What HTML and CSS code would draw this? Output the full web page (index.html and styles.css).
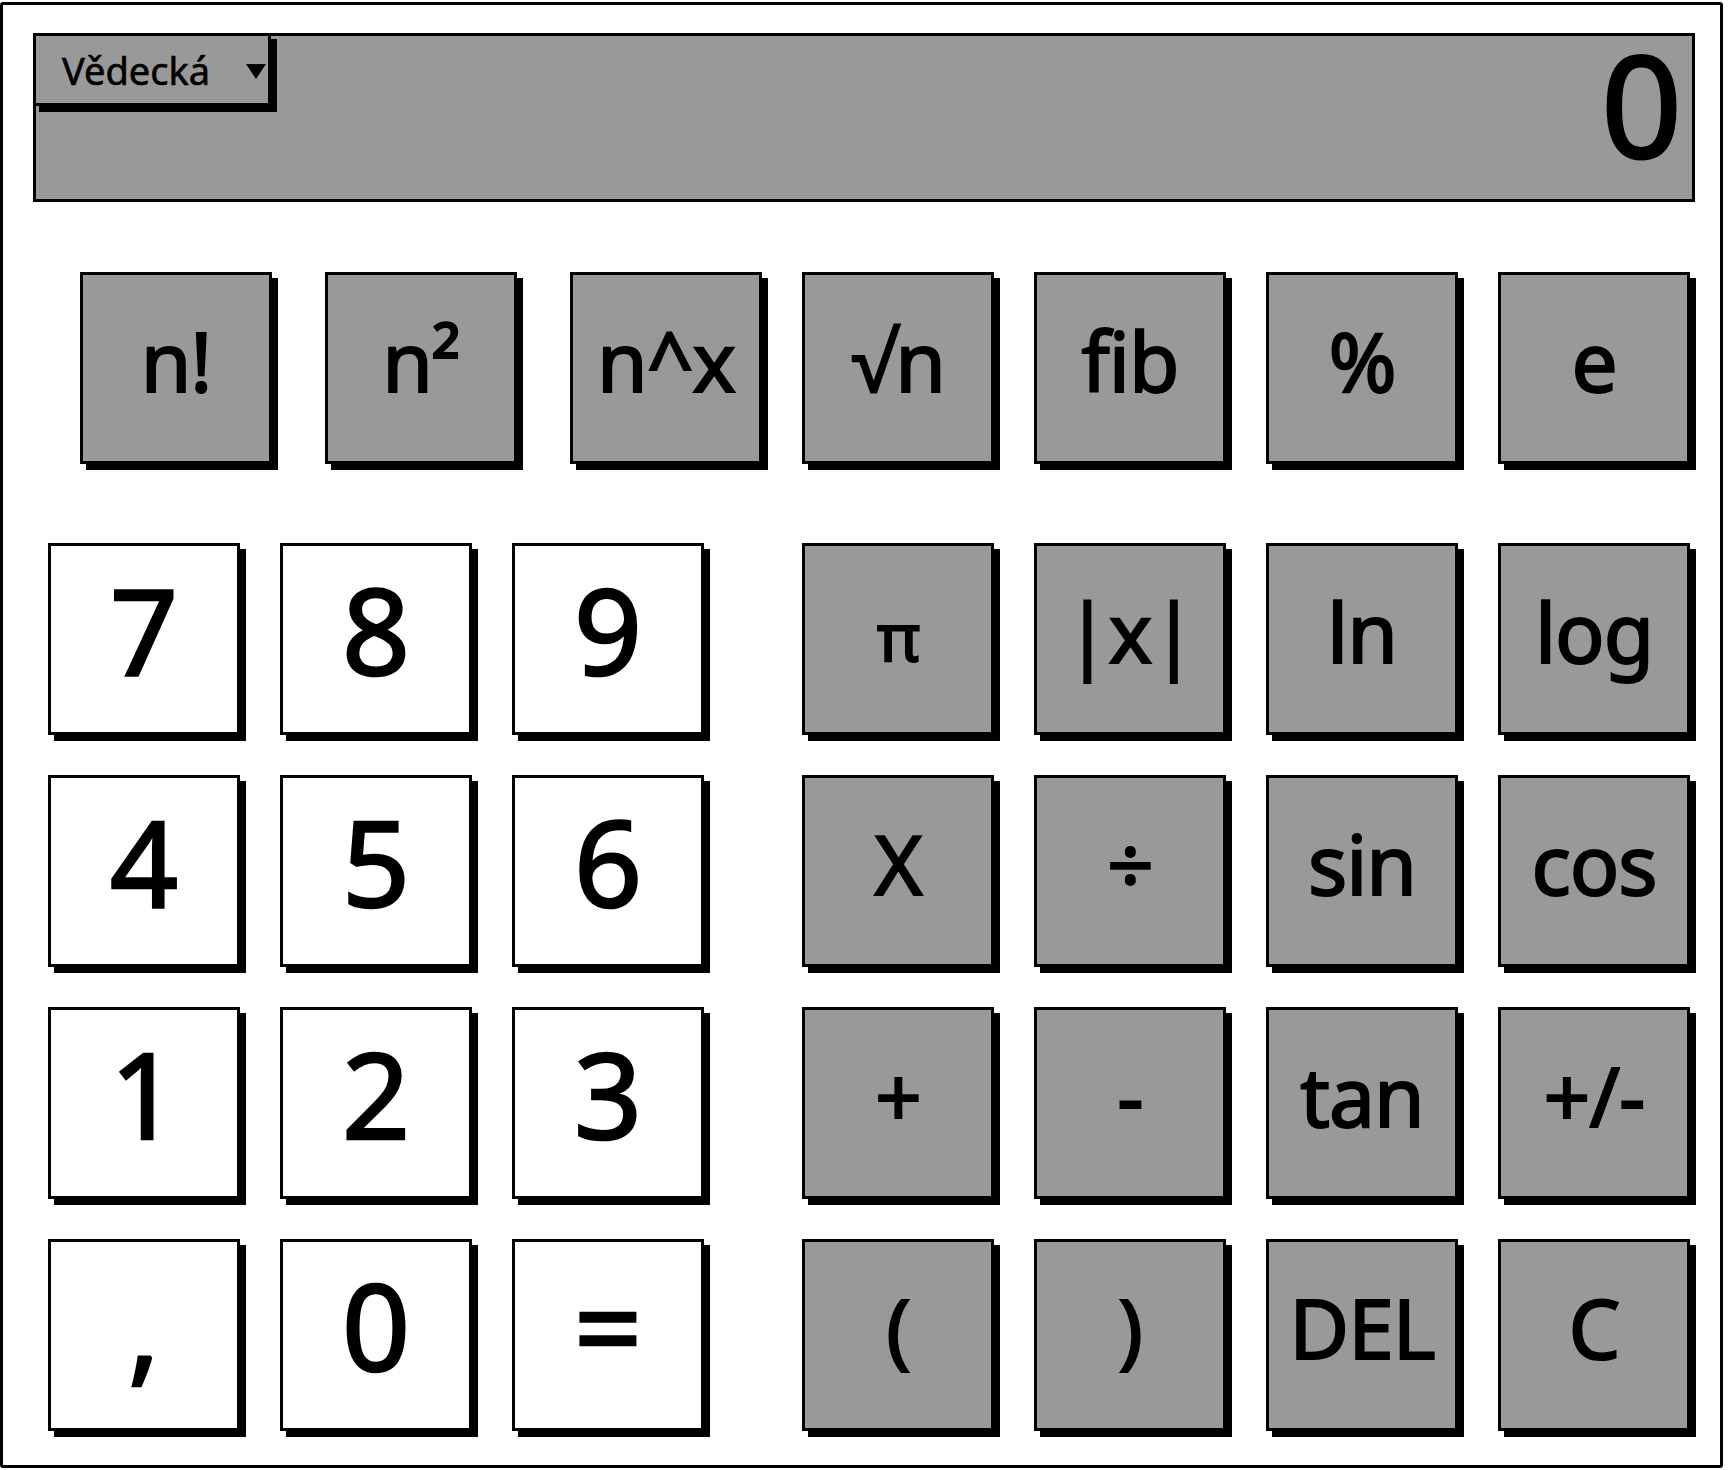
FILE: index.html
```html
<!DOCTYPE html>
<html lang="cs">
<head>
<meta charset="utf-8">
<title>Kalkulačka</title>
<link rel="stylesheet" href="styles.css">
</head>
<body>
<div class="frame">
  <div class="display">
    <div class="mode">
      <span class="mode-label">Vědecká</span>
      <svg class="caret" width="20" height="15" viewBox="0 0 20 15"><polygon points="0,0 20,0 10,15" fill="#000"/></svg>
    </div>
    <div class="value">0</div>
  </div>

  <div class="fn-row">
    <div class="fn-left">
      <div class="key gray">n!</div>
      <div class="key gray">n²</div>
      <div class="key gray">n^x</div>
    </div>
    <div class="fn-right">
      <div class="key gray">√n</div>
      <div class="key gray">fib</div>
      <div class="key gray">%</div>
      <div class="key gray">e</div>
    </div>
  </div>

  <div class="pad">
    <div class="numpad">
      <div class="key num">7</div>
      <div class="key num">8</div>
      <div class="key num">9</div>
      <div class="key num">4</div>
      <div class="key num">5</div>
      <div class="key num">6</div>
      <div class="key num">1</div>
      <div class="key num">2</div>
      <div class="key num">3</div>
      <div class="key num">,</div>
      <div class="key num">0</div>
      <div class="key num">=</div>
    </div>
    <div class="ops">
      <div class="key gray pi">π</div>
      <div class="key gray">|x|</div>
      <div class="key gray">ln</div>
      <div class="key gray">log</div>
      <div class="key gray">X</div>
      <div class="key gray">÷</div>
      <div class="key gray">sin</div>
      <div class="key gray">cos</div>
      <div class="key gray">+</div>
      <div class="key gray">-</div>
      <div class="key gray">tan</div>
      <div class="key gray">+/-</div>
      <div class="key gray">(</div>
      <div class="key gray">)</div>
      <div class="key gray">DEL</div>
      <div class="key gray">C</div>
    </div>
  </div>
</div>
</body>
</html>
```

FILE: styles.css
```css
html, body {
  margin: 0;
  padding: 0;
  background: #fff;
}

body {
  font-family: "Noto Sans", "Open Sans", "DejaVu Sans", sans-serif;
  color: #000;
}

.frame {
  box-sizing: border-box;
  width: 1723px;
  height: 1466px;
  margin-top: 2px;
  border: 3px solid #000;
  border-radius: 3px;
}

.display {
  box-sizing: border-box;
  width: 1662px;
  height: 169px;
  margin: 28px 0 0 30px;
  background: #999;
  border: 3px solid #000;
  display: flex;
  justify-content: space-between;
  align-items: flex-start;
}

.mode {
  box-sizing: border-box;
  width: 238px;
  height: 73px;
  margin: -3px 0 0 -3px;
  border: 3px solid #000;
  box-shadow: 6px 6px 0 #000;
  display: flex;
  align-items: center;
  padding: 0 2px 0 26px;
}

.mode-label {
  font-size: 38px;
  line-height: 1;
  -webkit-text-stroke: 0.6px #000;
}

.caret {
  margin-left: auto;
  margin-top: 4px;
}

.value {
  font-size: 141px;
  line-height: 135px;
  padding-right: 10px;
  -webkit-text-stroke: 3px #000;
}

.fn-row {
  display: flex;
  gap: 40px;
  margin: 70px 0 0 77px;
}

.fn-left {
  display: flex;
  gap: 53px;
}

.fn-right {
  display: flex;
  gap: 40px;
}

.pad {
  display: flex;
  gap: 98px;
  margin: 79px 0 0 45px;
}

.numpad {
  display: grid;
  grid-template-columns: repeat(3, 192px);
  grid-auto-rows: 192px;
  gap: 40px;
}

.ops {
  display: grid;
  grid-template-columns: repeat(4, 192px);
  grid-auto-rows: 192px;
  gap: 40px;
}

.key {
  box-sizing: border-box;
  width: 192px;
  height: 192px;
  border: 3px solid #000;
  box-shadow: 6px 6px 0 #000;
  display: flex;
  align-items: center;
  justify-content: center;
  line-height: 1;
  white-space: nowrap;
}

.gray {
  background: #999;
  font-size: 82px;
  letter-spacing: -1px;
  padding-bottom: 16px;
  -webkit-text-stroke: 2px #000;
}

.gray.pi {
  font-size: 66px;
  padding-bottom: 8px;
}

.num {
  background: #fff;
  font-size: 119px;
  padding-bottom: 20px;
  -webkit-text-stroke: 2.5px #000;
}
```
